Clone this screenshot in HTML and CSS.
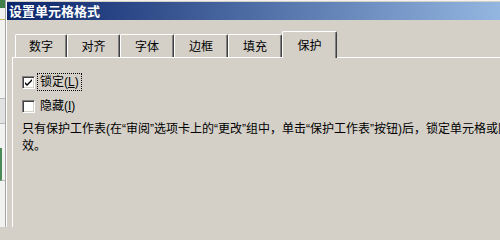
FILE: index.html
```html
<!DOCTYPE html>
<html lang="zh">
<head>
<meta charset="utf-8">
<link rel="stylesheet" href="styles.css">
</head>
<body>
<div class="strip">
  <div class="strip-green"></div>
  <div class="strip-line yellow"></div>
  <div class="strip-cell"></div>
  <div class="strip-cell gray"></div>
  <div class="strip-green-v"></div>
</div>
<div class="dialog">
  <div class="titlebar">设置单元格格式</div>
  <div class="body">
    <div class="tabs">
      <div class="tab">数字</div>
      <div class="tab">对齐</div>
      <div class="tab">字体</div>
      <div class="tab">边框</div>
      <div class="tab">填充</div>
      <div class="tab active">保护</div>
    </div>
    <div class="panel">
      <div class="row">
        <span class="check">
          <svg width="9" height="9" viewBox="0 0 9 9"><path d="M1 4 L3 6 L8 1 L8 3 L3 8 L1 6 Z" fill="#000"/></svg>
        </span>
        <span class="label focus">锁定(<u>L</u>)</span>
      </div>
      <div class="row second">
        <span class="check"></span>
        <span class="label">隐藏(<u>I</u>)</span>
      </div>
      <p class="note">只有保护工作表(在“审阅”选项卡上的“更改”组中，单击“保护工作表”按钮)后，锁定单元格或隐藏公式才有<br>效。</p>
    </div>
  </div>
</div>
</body>
</html>
```

FILE: styles.css
```css
html, body {
  margin: 0;
  padding: 0;
}
body {
  width: 500px;
  height: 227px;
  overflow: hidden;
  display: flex;
  background: #d4d0c8;
  font-family: "Liberation Sans", "Noto Sans CJK SC", sans-serif;
  font-size: 12px;
  color: #000;
}
.strip {
  width: 5px;
  flex: none;
  background: #f2f2f0;
  border-right: 1px solid #a4a4a4;
  display: flex;
  flex-direction: column;
}
.strip-green {
  height: 8px;
  background: #3f7f4a;
}
.strip-line {
  height: 1px;
  margin-top: 11px;
  background: #9a9a9a;
}
.strip-line.yellow {
  background: #c9b86a;
}
.strip-cell {
  height: 78px;
  border-bottom: 1px solid #b8b8b8;
}
.strip-cell.gray {
  height: 24px;
  background: #e2e2e2;
}
.strip-green-v {
  height: 32px;
  margin-top: 24px;
  border-left: 2px solid #4a8a56;
  border-bottom: 1px solid #b8b8b8;
}
.dialog {
  width: 560px;
  flex: none;
  border-left: 1px solid #ffffff;
  border-top: 1px solid #f4f3f0;
  padding-top: 1px;
  display: flex;
  flex-direction: column;
}
.titlebar {
  height: 18px;
  line-height: 18px;
  padding-left: 2px;
  background: linear-gradient(to right, #0a246a, #a6caf0);
  color: #fff;
  font-weight: bold;
  font-size: 13px;
  font-family: "Noto Sans CJK SC", sans-serif;
}
.body {
  flex: 1;
  padding: 11px 0 0 5px;
  display: flex;
  flex-direction: column;
}
.tabs {
  display: flex;
  align-items: flex-end;
  padding-left: 3px;
  height: 26px;
  position: relative;
  z-index: 1;
}
.tab {
  box-sizing: border-box;
  width: 54px;
  height: 23px;
  line-height: 22px;
  text-align: center;
  border-top: 1px solid #ffffff;
  border-left: 1px solid #ffffff;
  border-right: 1px solid #404040;
  box-shadow: inset -1px 0 0 #808080;
  border-radius: 2px 2px 0 0;
  font-family: "Noto Sans CJK SC", sans-serif;
}
.tab:first-child {
  width: 52px;
}
.tab:nth-child(2) {
  width: 53px;
}
.tab.active {
  width: 55px;
  height: 27px;
  margin-bottom: -1px;
  line-height: 26px;
  background: #d4d0c8;
  padding-bottom: 2px;
}
.panel {
  flex: 1;
  border-top: 1px solid #ffffff;
  border-left: 1px solid #ffffff;
  padding: 15px 0 0 9px;
}
.row {
  display: flex;
  align-items: center;
  height: 18px;
}
.row.second {
  margin-top: 6px;
}
.check {
  box-sizing: border-box;
  width: 13px;
  height: 13px;
  flex: none;
  background: #fff;
  border-top: 1px solid #808080;
  border-left: 1px solid #808080;
  border-right: 1px solid #ffffff;
  border-bottom: 1px solid #ffffff;
  box-shadow: inset 1px 1px 0 #404040, inset -1px -1px 0 #d4d0c8;
  display: flex;
  align-items: center;
  justify-content: center;
}
.check svg {
  display: block;
}
.label {
  margin-left: 2px;
  padding: 0 2px;
  line-height: 16px;
  border: 1px solid transparent;
}
.label.focus {
  border: 1px dotted #000;
}
.note {
  margin: 6px 0 0;
  line-height: 17px;
  white-space: nowrap;
}
```
